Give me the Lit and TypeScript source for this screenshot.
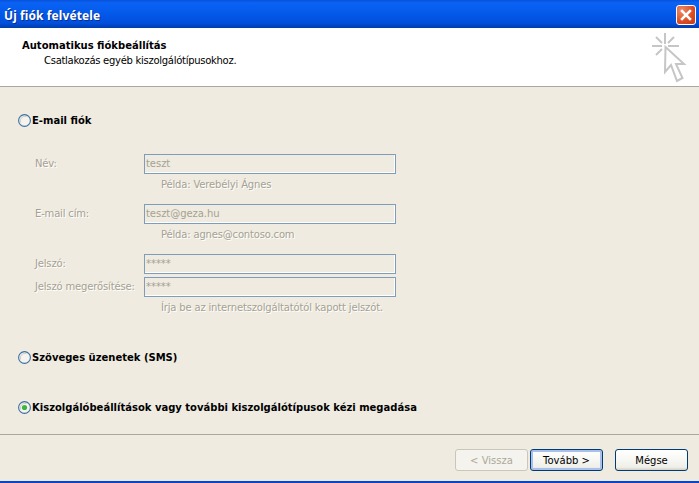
import { LitElement, html, svg, css } from "lit";
import { customElement } from "lit/decorators.js";

@customElement("app-root")
export class AppRoot extends LitElement {
  static styles = css`
    :host { display: block; width: 699px; height: 483px; overflow: hidden; font-family: "DejaVu Sans", sans-serif; font-size: 10px; color: #000; background: #efebe0; }
    .win { display: flex; flex-direction: column; height: 483px; }
    .title { height: 28px; flex: none; box-sizing: border-box; display: flex; align-items: center; justify-content: space-between; padding: 2px 3px 0 4px;
      background: linear-gradient(180deg, #0a50d8 0%, #0a63f5 10%, #0358e8 50%, #0150dd 82%, #003cac 100%); }
    .title span { color: #fff; font-family: "Noto Sans", sans-serif; font-weight: 700; font-size: 12px; letter-spacing: 0.1px; text-shadow: 1px 1px 0 #0a2f90; }
    .close { width: 20px; height: 20px; box-sizing: border-box; border: 1px solid #fff; border-radius: 3px; background: radial-gradient(circle at 25% 25%, #ec8a68, #dc4c22 60%, #c43c14); display: flex; align-items: center; justify-content: center; }
    .head { height: 59px; flex: none; box-sizing: border-box; background: #fff; border-bottom: 1px solid #aca899; display: flex; justify-content: space-between; padding: 4px 12px 0 22px; }
    .head .text { margin-top: 7px; }
    .head .t { font-weight: 700; line-height: 13px; }
    .head .s { margin-left: 22px; line-height: 13px; margin-top: 2px; letter-spacing: -0.28px; }
    .body { flex: 1; padding: 0 18px; border-bottom: 1px solid #aca899; display: flex; flex-direction: column; }
    .radio { display: flex; align-items: center; gap: 1px; font-weight: 700; height: 14px; }
    .r { width: 13px; height: 13px; flex: none; }
    .email { margin-top: 26px; }
    .form { margin: 27px 0 0 17px; display: grid; grid-template-columns: 109px 252px; color: #a5a192; text-shadow: 1px 1px 0 #fff; letter-spacing: -0.17px; }
    .lab { line-height: 20px; height: 20px; }
    .inp { height: 20px; box-sizing: border-box; border: 1px solid #7f9db9; background: #efebe0; padding: 0 1px; line-height: 17px; text-shadow: none; letter-spacing: -0.05px; box-shadow: inset -1px -1px 0 #fff; }
    .hint { grid-column: 2; padding: 4px 0 0 17px; line-height: 13px; height: 30px; box-sizing: border-box; }
    .gap3 { grid-column: 1 / 3; height: 3px; }
    .sms { margin-top: 23px; }
    .manual { margin-top: 36px; }
    .foot { height: 46px; flex: none; display: flex; justify-content: flex-end; padding: 14px 11px 0 0; box-sizing: border-box; }
    .btn { width: 73px; height: 22px; box-sizing: border-box; border: 1px solid #003c74; border-radius: 3px; background: linear-gradient(180deg, #fff, #f0f0ea 85%, #d6d0c5); display: flex; align-items: center; justify-content: center; }
    .btn.off { color: #aca899; border-color: #c9c7ba; background: #f4f3ee; text-shadow: none; }
    .btn.def { box-shadow: inset 0 0 0 2px #a9c0ea; margin-left: 2px; }
    .btn.can { margin-left: 12px; }
    .strip { height: 2px; flex: none; background: #0a44c8; }
  `;

  radio(on = false) {
    return html`<svg class="r" viewBox="0 0 13 13"><circle cx="6.5" cy="6.5" r="5.9" fill="#f4f3ee" stroke="#3a6ea5" stroke-width="1.1"/><path d="M2.6 8.5A4.6 4.6 0 0 1 8.5 2.6" fill="none" stroke="#cfcec6" stroke-width="1"/>${on ? svg`<circle cx="6.5" cy="6.5" r="2.6" fill="#3fb53f"/>` : ""}</svg>`;
  }

  render() {
    return html`<div class="win">
      <div class="title"><span>Új fiók felvétele</span>
        <div class="close"><svg width="14" height="14" viewBox="0 0 13 13"><path d="M2 2 L11 11 M11 2 L2 11" stroke="#fff" stroke-width="2.4"/></svg></div>
      </div>
      <div class="head">
        <div class="text"><div class="t">Automatikus fiókbeállítás</div><div class="s">Csatlakozás egyéb kiszolgálótípusokhoz.</div></div>
        <svg width="36" height="52" viewBox="0 0 36 52" fill="none" stroke="#c6c6c6" stroke-width="2"><path d="M14 1V12M1 14H11M17 14H28M5 5L11 11M23 5L17 11M5 23L11 17"/><path d="M14.5 15L33 32H25L31.5 46L26 49L20 33L14 40Z" fill="#fff"/></svg>
      </div>
      <div class="body">
        <label class="radio email">${this.radio()}E-mail fiók</label>
        <div class="form">
          <div class="lab">Név:</div><div class="inp">teszt</div><div class="hint">Példa: Verebélyi Ágnes</div>
          <div class="lab">E-mail cím:</div><div class="inp">teszt@geza.hu</div><div class="hint">Példa: agnes@contoso.com</div>
          <div class="lab">Jelszó:</div><div class="inp">*****</div><div class="gap3"></div>
          <div class="lab">Jelszó megerősítése:</div><div class="inp">*****</div><div class="hint">Írja be az internetszolgáltatótól kapott jelszót.</div>
        </div>
        <label class="radio sms">${this.radio()}Szöveges üzenetek (SMS)</label>
        <label class="radio manual">${this.radio(true)}Kiszolgálóbeállítások vagy további kiszolgálótípusok kézi megadása</label>
      </div>
      <div class="foot">
        <div class="btn off">&lt; Vissza</div><div class="btn def">Tovább &gt;</div><div class="btn can">Mégse</div>
      </div>
      <div class="strip"></div>
    </div>`;
  }
}
